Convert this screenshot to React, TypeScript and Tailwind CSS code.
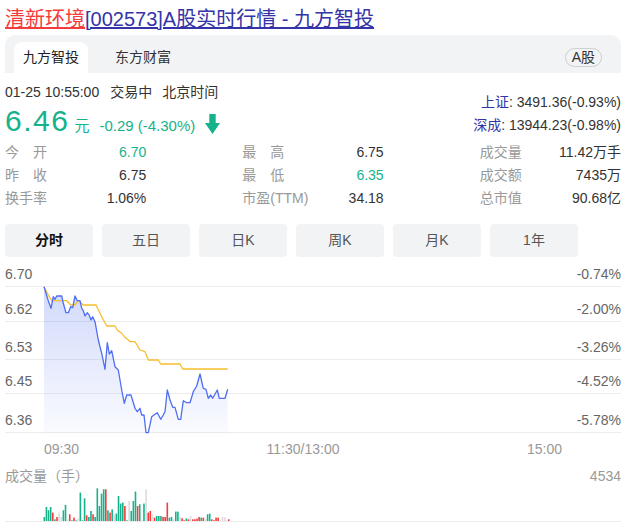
import React from "react";

const GREEN = "#16b28b";

const bluePts =
  "44,286.7 48.3,300.7 51,308.3 53.3,296.7 55,299.3 56.7,296 61.7,296 63.3,303.3 66,312.7 68.3,312.7 70.7,306.7 72.7,307.7 75,296 77.3,300.7 80,300.7 81.7,308.3 83.3,310.7 85,316 87.3,312.7 89.3,315.3 91,320 92.7,316.7 95,321.7 98.3,340 101.7,353.3 105,369.3 107.3,342.7 109.3,354 111.7,350.7 115,366.7 118.3,370 121.7,390 124.3,403.3 126.7,395 131,395 135,408.3 137.3,411.7 140,408.3 141.7,415 144,415 146,432.7 148.3,432.7 151.7,416.7 154,415 157.3,412.7 160.7,419.3 163.3,415 165,411.7 167.3,390 170,400 172.7,407.3 175,407.3 178.3,419.3 180.7,419.3 183.3,400.7 186.7,402.7 190,402.7 193.3,391.7 196.7,386 200,374 203.3,388.3 206,389.3 208.3,398.3 210.7,395 212.7,398.3 217.3,390 219.3,398.3 225,398.3 227.7,389.3";

const yellowPts =
  "44,286.7 48.3,295 51.7,300.7 66.7,300.7 70.7,305 75,305 78.3,300.7 83.3,305 96,305 101.7,316.7 106.7,326 115,326 117.3,330 121.7,333.3 125,337.3 128.3,340 130,341.7 135,341.7 140,350 145,351.7 148.3,360 158.3,360 160.7,364 180,364 182.7,369 227.7,369";

const volRaw =
  "g4 g14 g10.7 g14 r8.4 g1.7 r4 y8.4 y4 g10.7 g16 y1.7 r6.7 g0.7 r3.4 g0.7 y2.7 g28.4 g0.7 g22.7 r5.7 g4 g10 r6.7 g4 g32.7 g15 g27.4 g31.7 r31.7 g10.7 r8.4 g11.7 y6.7 g7.4 g25 g17.4 g18.4 r15 g0.7 y20 g10 g20 g29.4 r15 g16.7 y0.7 g17.4 y31.7 r8.4 r10 y6.7 r3.4 g5 g5 g5 r4 r4 r18.4 g3.4 g4 y1.7 g9.4 g9.4 y4 r2.7 r0.7 g2.7 r1.7 y5 r1.7 r1.7 r2.4 r4 g3.4 r3.4 y1.7 g6.7 g7.4 r1.7 r0.7 r3.4 r3.4 y0.7 y4 y4 y0.7 r1.7";

const vols = volRaw.split(" ").map((s) => ({
  c: s[0] === "g" ? GREEN : s[0] === "r" ? "#f53b3b" : "#dcdcdc",
  h: parseFloat(s.slice(1)),
}));

function Label({ text }: { text: string }) {
  if (text.length === 2) {
    return (
      <span className="flex w-[42px] justify-between text-[#999]">
        <span>{text[0]}</span>
        <span>{text[1]}</span>
      </span>
    );
  }
  return <span className="text-[#999]">{text}</span>;
}

function Stat({ label, value, green }: { label: string; value: string; green?: boolean }) {
  return (
    <div className="flex justify-between">
      <Label text={label} />
      <span className={green ? "text-[#16b28b]" : "text-[#333]"}>{value}</span>
    </div>
  );
}

const rows = [
  { h: "h-[30px]", l: "6.70", r: "-0.74%" },
  { h: "h-[35px]", l: "6.62", r: "-2.00%" },
  { h: "h-[38px]", l: "6.53", r: "-3.26%" },
  { h: "h-[34px]", l: "6.45", r: "-4.52%" },
  { h: "h-[39px]", l: "6.36", r: "-5.78%" },
];

export default function App() {
  const n = vols.length;
  const step = (228.8 - 44.3) / (n - 1);
  const bluePoly = bluePts;
  const areaPts = "44,433 " + bluePts + " 227.7,433";
  return (
    <div className="w-[630px] h-[526px] overflow-hidden bg-white pl-[5px] pr-[9px] font-['Liberation_Sans','Noto_Sans_CJK_SC',sans-serif] text-[14px] text-[#333]">
      <div className="pt-[5px] text-[20px] leading-[28px] whitespace-nowrap">
        <a className="underline text-[#f53b3b]">清新环境</a>
        <a className="underline text-[#3434a8]">[002573]A股实时行情 - 九方智投</a>
      </div>

      <div className="mt-[2px] h-[38px] bg-[#f2f3f5] rounded-t-[10px] flex items-end px-[9px]">
        <div className="h-[31px] px-[9px] bg-white rounded-t-[8px] leading-[31px] text-[#222]">九方智投</div>
        <div className="h-[31px] px-[9px] ml-[18px] leading-[31px] text-[#333]">东方财富</div>
        <div className="ml-auto mr-[10px] mb-[6px] h-[19px] px-[6px] border border-[#cfcfcf] rounded-full leading-[17px] text-[#333]">
          A股
        </div>
      </div>

      <div className="mt-[9px] flex justify-between">
        <div>
          <div className="h-[20px] leading-[20px] whitespace-nowrap">
            01-25 10:55:00<span className="ml-[11px]">交易中</span>
            <span className="ml-[10px]">北京时间</span>
          </div>
          <div className="h-[39px] flex items-baseline text-[#16b28b]">
            <span className="text-[30px] leading-[37px] tracking-[1.5px]">6.46</span>
            <span className="ml-[5px] text-[15px]">元</span>
            <span className="ml-[10px] text-[15px]">-0.29 (-4.30%)</span>
            <svg className="ml-[10px] translate-y-[3px]" width="15" height="20" viewBox="0 0 15 20">
              <path d="M4.3 0 H10.7 V9 H15 L7.5 20 L0 9 H4.3 Z" fill={GREEN} />
            </svg>
          </div>
        </div>
        <div className="pt-[9px] leading-[23px] text-right whitespace-nowrap">
          <div>
            <span className="text-[#3434a8]">上证</span>: 3491.36(-0.93%)
          </div>
          <div>
            <span className="text-[#3434a8]">深成</span>: 13944.23(-0.98%)
          </div>
        </div>
      </div>

      <div className="grid grid-cols-3 gap-x-[96px] leading-[23px]">
        <Stat label="今开" value="6.70" green />
        <Stat label="最高" value="6.75" />
        <Stat label="成交量" value="11.42万手" />
        <Stat label="昨收" value="6.75" />
        <Stat label="最低" value="6.35" green />
        <Stat label="成交额" value="7435万" />
        <Stat label="换手率" value="1.06%" />
        <Stat label="市盈(TTM)" value="34.18" />
        <Stat label="总市值" value="90.68亿" />
      </div>

      <div className="mt-[14px] flex gap-[9px]">
        {["分时", "五日", "日K", "周K", "月K", "1年"].map((t, i) => (
          <div
            key={t}
            className={
              "w-[88px] h-[33px] rounded-[4px] bg-[#f2f3f5] flex items-center justify-center " +
              (i === 0 ? "font-bold text-[#111]" : "text-[#555]")
            }
          >
            {t}
          </div>
        ))}
      </div>

      <div className="relative">
        {rows.map((r) => (
          <div
            key={r.l}
            className={r.h + " border-b border-[#ececec] flex items-end justify-between pb-[2px] leading-[20px] text-[#666]"}
          >
            <span>{r.l}</span>
            <span>{r.r}</span>
          </div>
        ))}
        <svg className="absolute left-0 top-0 overflow-visible" width="616" height="176">
          <defs>
            <linearGradient id="fillg" x1="0" y1="287" x2="0" y2="433" gradientUnits="userSpaceOnUse">
              <stop offset="0" stopColor="#5b78f0" stopOpacity="0.28" />
              <stop offset="1" stopColor="#5b78f0" stopOpacity="0.03" />
            </linearGradient>
          </defs>
          <g transform="translate(-5,-257)">
            <polygon points={areaPts} fill="url(#fillg)" />
            <polyline points={yellowPts} fill="none" stroke="#f7bf2e" strokeWidth="1.3" strokeLinejoin="round" />
            <polyline points={bluePoly} fill="none" stroke="#4f6ef2" strokeWidth="1.3" strokeLinejoin="round" />
          </g>
        </svg>
      </div>

      <div className="h-[26px] pt-[6px]">
        <div className="ml-[39px] w-[518px] flex justify-between leading-[20px] text-[#999]">
          <span>09:30</span>
          <span>11:30/13:00</span>
          <span>15:00</span>
        </div>
      </div>

      <div className="mt-[7px] flex justify-between leading-[20px] text-[#999]">
        <span>成交量（手）</span>
        <span>4534</span>
      </div>
      <div className="h-[36px] border-b border-[#ececec]">
        <svg width="616" height="35">
          {vols.map((v, i) => (
            <rect key={i} x={44.3 + i * step - 5 - 0.8} y={35 - v.h} width="1.6" height={v.h} fill={v.c} />
          ))}
        </svg>
      </div>
    </div>
  );
}
